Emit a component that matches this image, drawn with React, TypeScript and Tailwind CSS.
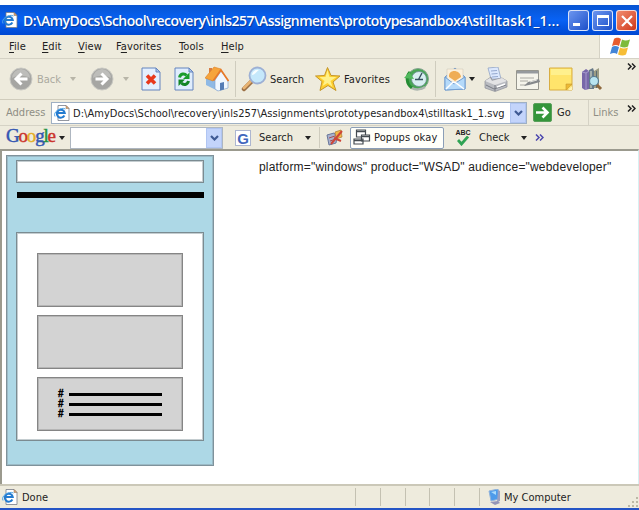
import React from 'react';

const PAGE_TITLE = 'D:\\AmyDocs\\School\\recovery\\inls257\\Assignments\\prototypesandbox4\\stilltask1_1...';
const ADDRESS = 'D:\\AmyDocs\\School\\recovery\\inls257\\Assignments\\prototypesandbox4\\stilltask1_1.svg';

const menuItems = [
  { before: '', key: 'F', after: 'ile', width: 'w-[33px]' },
  { before: '', key: 'E', after: 'dit', width: 'w-9' },
  { before: '', key: 'V', after: 'iew', width: 'w-[38px]' },
  { before: 'F', key: 'a', after: 'vorites', width: 'w-[63px]' },
  { before: '', key: 'T', after: 'ools', width: 'w-[42px]' },
  { before: '', key: 'H', after: 'elp', width: 'w-8' },
];

function Caret({ className }: { className: string }) {
  return (
    <svg viewBox="0 0 6 4" className={`w-1.5 h-1 shrink-0 ${className}`}>
      <path d="M0 0h6L3 4z" fill="currentColor" />
    </svg>
  );
}

function Chevrons({ className }: { className: string }) {
  return (
    <svg viewBox="0 0 9 7" className={`w-[9px] h-[7px] shrink-0 ${className}`} fill="none" stroke="currentColor" strokeWidth="1.5">
      <path d="M1 .5l3 3-3 3M5 .5l3 3-3 3" />
    </svg>
  );
}

function PageIcon({ className }: { className: string }) {
  return (
    <svg viewBox="0 0 16 16" className={`w-4 h-4 shrink-0 ${className}`}>
      <path d="M4 .5h8l3 3v12H4z" fill="#fff" stroke="#777c88" strokeWidth=".8" />
      <path d="M12 .5v3h3z" fill="#e4a66d" stroke="#8a7358" strokeWidth=".5" />
      <path d="M10.4 10.5a4 4 0 1 1 .4-2.4H3.5" fill="none" stroke="#237bd0" strokeWidth="2" />
      <path d="M1 11.5C-1.5 7 7 1.5 11.5 4" fill="none" stroke="#4ea3e5" strokeWidth="1" />
    </svg>
  );
}

function ArrowCircle({ flip, className }: { flip?: boolean; className: string }) {
  return (
    <svg viewBox="0 0 24 24" className={`w-6 h-6 shrink-0 ${className}`}>
      <circle cx="12" cy="12" r="11" fill="#a6a6a3" stroke="#c9c9c3" />
      <path d="M3 11a9 9 0 0 1 18 0c-5-3-13-3-18 0" fill="#bdbdba" />
      <path
        d={flip ? 'M5.5 12h11M11.5 6.5L17 12l-5.5 5.5' : 'M18.5 12h-11M12.5 6.5L7 12l5.5 5.5'}
        fill="none" stroke="#fff" strokeWidth="3"
      />
    </svg>
  );
}

function StopIcon() {
  return (
    <svg viewBox="0 0 20 24" className="ml-3 w-5 h-6 shrink-0">
      <path d="M1 1h14l4 4v18H1z" fill="#e4f0ff" stroke="#6584bd" />
      <path d="M15 1v4h4z" fill="#a9c4ed" stroke="#6584bd" />
      <path d="M6 8.5l8 8M14 8.5l-8 8" stroke="#e8391d" strokeWidth="3.6" />
    </svg>
  );
}

function RefreshIcon() {
  return (
    <svg viewBox="0 0 20 24" className="ml-[13px] w-5 h-6 shrink-0">
      <path d="M1 1h14l4 4v18H1z" fill="#e0edfd" stroke="#6584bd" />
      <path d="M15 1v4h4z" fill="#a9c4ed" stroke="#6584bd" />
      <path d="M5.5 10.5c1-4 5-4.5 7-2" fill="none" stroke="#199c2d" strokeWidth="3" />
      <path d="M15.5 5.5V12H9z" fill="#199c2d" />
      <path d="M14.5 14c-1 4-5 4.5-7 2" fill="none" stroke="#138525" strokeWidth="3" />
      <path d="M4.5 19v-6.5H11z" fill="#138525" />
    </svg>
  );
}

function HomeIcon() {
  return (
    <svg viewBox="0 0 24 26" className="ml-[11px] w-6 h-[26px] shrink-0">
      <path d="M1 11l9-6 3 8v12L1 19z" fill="#8fb9e5" />
      <path d="M10 14l6-9 7 9v8l-10 3-3-2z" fill="#f0f7ff" stroke="#84a3ce" strokeWidth=".7" />
      <path d="M4 2h3v5H4z" fill="#d77b43" />
      <path d="M0 12L9 1l7 2-8 12z" fill="#f6a43b" stroke="#dc8025" strokeWidth=".6" />
      <path d="M8.5 14.5L16 4l7.5 11" fill="none" stroke="#e87a29" strokeWidth="1.8" />
      <path d="M15 17l4-1v7.5l-4 1z" fill="#557cb5" />
    </svg>
  );
}

function SearchIcon() {
  return (
    <svg viewBox="0 0 26 26" className="ml-[5px] w-[26px] h-[26px] shrink-0">
      <path d="M3 23l7-7" stroke="#9c7045" strokeWidth="4.5" strokeLinecap="round" />
      <path d="M3 22l7-7" stroke="#e9b473" strokeWidth="2.8" strokeLinecap="round" />
      <circle cx="16.5" cy="9.5" r="8" fill="#c5e8fb" stroke="#9db0d4" strokeWidth="1.8" />
      <path d="M11 9c0-4 4-6 7-5-2 1-4 5-7 5" fill="#f8fdff" />
    </svg>
  );
}

function StarIcon() {
  return (
    <svg viewBox="0 0 26 26" className="ml-2.5 w-[26px] h-[26px] shrink-0">
      <path d="M12.5 1.5l3.5 8 9 .5-7 6 3 8.5-8-5-8 5 2-9-6.5-5.5 9-.5z" fill="#ffcf2e" stroke="#c4962b" strokeWidth="1" />
      <path d="M12.5 4l2 7h7l-6 4 2 6-5-4-5 3 2-5-5-4h6z" fill="#fff18a" />
    </svg>
  );
}

function HistoryIcon() {
  return (
    <svg viewBox="0 0 26 24" className="ml-3 w-[26px] h-6 shrink-0">
      <circle cx="14" cy="12" r="10.5" fill="#48a655" stroke="#8aa593" strokeWidth="1" />
      <circle cx="15" cy="12" r="7.5" fill="#d8eff1" stroke="#6d8e91" strokeWidth=".8" />
      <path d="M14.5 12.5L18 6M11 12.5h8" stroke="#36515f" strokeWidth="1.4" />
      <path d="M8 21C2 17 2 9 6 5" fill="none" stroke="#258c34" strokeWidth="3" />
      <path d="M0 11l5.5-6L10 12z" fill="#51b95d" />
      <path d="M8 21c3 2 9 2 13-1" fill="none" stroke="#abb5ae" strokeWidth="2.5" />
    </svg>
  );
}

function MailIcon() {
  return (
    <svg viewBox="0 0 22 24" className="ml-2 w-[22px] h-6 shrink-0">
      <path d="M1 10L11 1l10 9v12L1 23z" fill="#9ac4ed" stroke="#6f97c8" />
      <path d="M3 2h16v13H3z" fill="#fbf0dc" stroke="#c6c0b7" strokeWidth=".5" />
      <path d="M5 10c-1-8 11-8 12 0l-6 4z" fill="#efad55" />
      <path d="M1 10l9 7 11-7v12L1 23z" fill="#b5dafa" stroke="#739fd2" />
      <path d="M2 22l7-7 3 1 8 6" fill="none" stroke="#fff" strokeWidth="1.5" />
    </svg>
  );
}

function PrinterIcon() {
  return (
    <svg viewBox="0 0 24 25" className="ml-[9px] w-6 h-[25px] shrink-0">
      <path d="M4 1l10-1 3 12H7z" fill="#dce8fd" stroke="#92a4c5" strokeWidth=".8" />
      <path d="M7 4l6-.5M7.5 7l6-.5M8 10l6-.5" stroke="#94a8cf" />
      <path d="M1 14l6-4 1 3 10-2 5 3v6l-12 4.5L1 21z" fill="#b9bbc1" stroke="#8b8e97" strokeWidth=".7" />
      <path d="M1 14l10 4 12-4-5-3-10 3-2-3z" fill="#e3e3e5" />
      <path d="M11 18v6M2 18l8 4 12-4" fill="none" stroke="#787b84" strokeWidth="1" />
      <path d="M13 20l8-3" stroke="#fff" strokeWidth="1.5" />
    </svg>
  );
}

function EditIcon() {
  return (
    <svg viewBox="0 0 25 20" className="mt-0.5 ml-2 w-[25px] h-5 shrink-0">
      <path d="M.5.5h22v19H.5z" fill="#f5f4eb" stroke="#96968e" />
      <path d="M1 1h21v2.5H1z" fill="#969a9e" />
      <path d="M4 8h14M4 11h8M4 15h6" stroke="#aaa9a2" />
      <path d="M8 16l4-4 11-3 1 3-11 3z" fill="#85888b" />
      <path d="M14 12l7-2" stroke="#e4e4df" />
    </svg>
  );
}

function NoteIcon() {
  return (
    <svg viewBox="0 0 24 24" className="ml-2 w-6 h-6 shrink-0">
      <path d="M.5 1H23v22H.5z" fill="#ffe46b" stroke="#d8ad41" />
      <path d="M2 2h20v6H2z" fill="#fff08d" />
      <path d="M17 23v-6h6z" fill="#edb933" stroke="#c69731" strokeWidth=".6" />
      <path d="M19 23h4v-4z" fill="#fff3b4" />
    </svg>
  );
}

function ResearchIcon() {
  return (
    <svg viewBox="0 0 22 24" className="ml-2 w-[22px] h-6 shrink-0">
      <path d="M1 5l4-3 3 2v18l-4 1-3-2z" fill="#7867a9" />
      <path d="M1 5l4 1v17M5 6l3-2" fill="none" stroke="#a59bcb" />
      <path d="M8 3l4-2 1 3v18H8z" fill="#687a88" />
      <path d="M10 4v17" stroke="#bbc3b7" strokeWidth="1.5" />
      <path d="M13 4l5-3v20h-5z" fill="#9c9c83" />
      <path d="M15.5 4v17" stroke="#5d6c72" />
      <path d="M15 17l5 5" stroke="#8f693e" strokeWidth="3" />
      <circle cx="13" cy="14" r="4.5" fill="#b8e4f0" stroke="#587c91" strokeWidth="1.2" />
    </svg>
  );
}

function WindowsFlag() {
  return (
    <svg viewBox="0 0 20 19" className="w-5 h-[19px]">
      <path d="M4 2c3-2 5-1 7 0L9 9C7 7.5 5 7.5 2 9z" fill="#e75c2f" />
      <path d="M12 2.5c3 1.5 5 1 8 0l-2 7c-3 1.5-5 1-8 0z" fill="#7dbb3c" />
      <path d="M2 10c2-1.5 4-1.5 7 0l-2 7c-2-1.5-4-1.5-7 0z" fill="#4385d8" />
      <path d="M10 10.5c3 1.5 5 1 8 0l-2 7c-3 1.5-5 1-8 0z" fill="#f6bd35" />
    </svg>
  );
}

function TitleBar() {
  const button = 'w-[21px] h-[21px] shrink-0 rounded-[3px] border border-white/80 flex items-center justify-center';
  return (
    <div className="h-[30px] shrink-0 flex items-center bg-linear-to-b from-[#0754d2] via-[#0862f5] to-[#0048d2] pl-0.5 pr-0.5">
      <PageIcon className="" />
      <div className="ml-[5px] mt-0.5 w-[542px] shrink-0 font-['Open_Sans',sans-serif] text-[14px] leading-5 font-semibold text-white whitespace-nowrap [text-shadow:1px_1px_1px_#073796]">
        <span className="tracking-[-0.54px]">{PAGE_TITLE.slice(0, 66)}</span>
        <span className="tracking-[0.1px]">{PAGE_TITLE.slice(66)}</span>
      </div>
      <div className="ml-auto mt-px flex gap-[3px]">
        <div className={`${button} bg-linear-to-br from-[#6c95ef] to-[#1d4fc9]`}>
          <div className="w-[7px] h-[3px] bg-white mt-2 mr-1"></div>
        </div>
        <div className={`${button} bg-linear-to-br from-[#6c95ef] to-[#1d4fc9]`}>
          <div className="w-3 h-[11px] border border-t-[3px] border-white"></div>
        </div>
        <div className={`${button} bg-linear-to-br from-[#f18c6e] to-[#cf3516]`}>
          <svg viewBox="0 0 12 12" className="w-3 h-3">
            <path d="M1 1l10 10M11 1L1 11" stroke="#fff" strokeWidth="2.2" />
          </svg>
        </div>
      </div>
    </div>
  );
}

function MenuBar() {
  return (
    <div className="h-6 shrink-0 flex items-center border-b border-[#d5d2c5] pl-[9px]">
      {menuItems.map(item => (
        <div key={item.key} className={`${item.width} shrink-0 tracking-[0.1px] mt-px`}>
          {item.before}<span className="underline underline-offset-2">{item.key}</span>{item.after}
        </div>
      ))}
      <div className="ml-auto w-10 h-[23px] bg-white border-l border-[#d5d2c5] flex items-center justify-center">
        <WindowsFlag />
      </div>
    </div>
  );
}

function Toolbar() {
  return (
    <div className="h-[41px] shrink-0 flex items-center border-b border-[#d0ccbc] pl-[9px]">
      <ArrowCircle className="" />
      <span className="ml-1 mt-0.5 w-[25px] shrink-0 text-[#aaa99f]">Back</span>
      <Caret className="ml-2 text-[#b8b5a8]" />
      <ArrowCircle flip className="ml-[14px]" />
      <Caret className="ml-[9px] text-[#b8b5a8]" />
      <StopIcon />
      <RefreshIcon />
      <HomeIcon />
      <div className="ml-1.5 w-px h-9 bg-[#cfccbe]"></div>
      <SearchIcon />
      <span className="ml-[3px] mt-0.5 w-[35px] shrink-0">Search</span>
      <StarIcon />
      <span className="ml-[3px] mt-0.5 w-12 shrink-0 tracking-[0.15px]">Favorites</span>
      <HistoryIcon />
      <div className="ml-[5px] w-px h-9 bg-[#cfccbe]"></div>
      <MailIcon />
      <Caret className="ml-[3px]" />
      <PrinterIcon />
      <EditIcon />
      <NoteIcon />
      <ResearchIcon />
      <Chevrons className="ml-auto mr-[3px] mb-[26px]" />
    </div>
  );
}

function DropButton() {
  return (
    <div className="w-4 h-full shrink-0 bg-[#c3d4fb] border border-[#b0c5f2] flex items-center justify-center">
      <svg viewBox="0 0 9 6" className="w-[9px] h-1.5" fill="none" stroke="#3f5a94" strokeWidth="2.2">
        <path d="M1 1l3.5 3.5L8 1" />
      </svg>
    </div>
  );
}

function AddressBar() {
  return (
    <div className="h-[26px] shrink-0 flex items-center border-b border-[#d5d2c5] pl-1.5">
      <span className="w-[45px] shrink-0 text-[#8f8e84]">Address</span>
      <div className="w-[476px] h-[22px] shrink-0 flex items-center bg-white border border-[#9fb0c4]">
        <PageIcon className="ml-0.5" />
        <span className="ml-[3px] mt-0.5 flex-1 whitespace-nowrap tracking-[0.04px]">{ADDRESS}</span>
        <DropButton />
      </div>
      <svg viewBox="0 0 19 19" className="ml-1.5 w-[19px] h-[19px] shrink-0">
        <rect x=".5" y=".5" width="18" height="18" rx="1.5" fill="#35953b" stroke="#5aa05b" />
        <path d="M3 9.5h11M9.5 4.5l5 5-5 5" fill="none" stroke="#fff" strokeWidth="2.6" />
      </svg>
      <span className="ml-[5px] mt-px w-[31px] shrink-0">Go</span>
      <div className="w-px h-[25px] bg-[#d5d2c5]"></div>
      <span className="ml-1 text-[#8f8e84]">Links</span>
      <Chevrons className="ml-auto mr-[3px] mb-[8px]" />
    </div>
  );
}

function GoogleBar() {
  return (
    <div className="h-[23px] shrink-0 flex items-center pl-1.5">
      <div className="w-[50px] shrink-0 font-['Liberation_Serif',serif] text-[19px] leading-5 tracking-[-1.2px] mb-1 [-webkit-text-stroke:0.5px]">
        <span className="text-[#3457b2]">G</span>
        <span className="text-[#cb342c]">o</span>
        <span className="text-[#e4ae27]">o</span>
        <span className="text-[#3457b2]">g</span>
        <span className="text-[#259344]">l</span>
        <span className="text-[#cb342c]">e</span>
      </div>
      <Caret className="ml-[3px]" />
      <div className="ml-[5px] w-[153px] h-[22px] shrink-0 flex justify-end bg-white border border-[#aeb6c0]">
        <DropButton />
      </div>
      <div className="ml-3 w-4 h-4 shrink-0 bg-white border border-[#adb6d0] font-['Liberation_Sans',sans-serif] text-[15px] leading-[15px] font-bold text-center text-[#4167bd]">G</div>
      <span className="ml-2 w-9 shrink-0">Search</span>
      <Caret className="ml-2.5" />
      <div className="ml-2 w-px h-[21px] bg-[#cfccbe]"></div>
      <svg viewBox="0 0 18 17" className="ml-1.5 w-[18px] h-[17px] shrink-0">
        <path d="M1 6l7-2 3 4-1 6-7 2z" fill="#a9b1cd" stroke="#69779b" />
        <path d="M3 9l6-2M4 12l6-2" stroke="#a54e54" />
        <path d="M9 3l6-2 1 7-6 2z" fill="#f2b748" stroke="#a97934" strokeWidth=".7" />
        <path d="M5 15L16 2M8 9l7 3" stroke="#ce4638" strokeWidth="2" />
      </svg>
      <div className="ml-[6px] w-[94px] h-[22px] shrink-0 flex items-center bg-[#fffffa] border border-[#8b9eb7] rounded-[2px]">
        <svg viewBox="0 0 18 17" className="ml-0.5 w-[18px] h-[17px] shrink-0" fill="#fff" stroke="#444b50" strokeWidth="1.2">
          <path d="M3.5 1h9v7h-9z" />
          <path d="M8.5 6h8v6h-8zM1 10h9v5H1z" />
          <path d="M3.5 2.5h9M8.5 7.5h8M1 11.5h9" strokeWidth="1.6" />
        </svg>
        <span className="ml-[3px] mt-px whitespace-nowrap tracking-[0.1px]">Popups okay</span>
      </div>
      <div className="ml-[10px] w-[18px] shrink-0 flex flex-col items-center">
        <span className="font-['Liberation_Sans',sans-serif] text-[7px] leading-[6px] font-bold">ABC</span>
        <svg viewBox="0 0 12 10" className="w-3 h-2.5">
          <path d="M1 4l3.5 4L11 .5" fill="none" stroke="#2fa354" strokeWidth="2.8" />
        </svg>
      </div>
      <span className="ml-[7px] w-[42px] shrink-0">Check</span>
      <Caret className="" />
      <Chevrons className="ml-2 text-[#4c48ae]" />
    </div>
  );
}

function Wireframe() {
  return (
    <div className="ml-1 mt-1 w-[208px] h-[311px] shrink-0 bg-[#add8e6] border border-[#7f929b] shadow-[inset_0_0_0_1px_#9bbac6] px-[9px] pt-1">
      <div className="h-[23px] bg-white border border-[#7b8b91] shadow-[inset_0_0_0_1px_#c4cdd0]"></div>
      <div className="mt-[9px] ml-px h-1.5 bg-black"></div>
      <div className="mt-[34px] h-[209px] bg-white border border-[#7b8b91] shadow-[inset_0_0_0_1px_#c4cdd0] px-5 pt-5 flex flex-col gap-[8px]">
        <div className="h-[54px] bg-[#d3d3d3] border border-[#858585] shadow-[inset_0_0_0_1px_#b5b5b5]"></div>
        <div className="h-[54px] bg-[#d3d3d3] border border-[#858585] shadow-[inset_0_0_0_1px_#b5b5b5]"></div>
        <div className="h-[54px] bg-[#d3d3d3] border border-[#858585] shadow-[inset_0_0_0_1px_#b5b5b5] pl-5 pt-[11px]">
          {[1, 2, 3].map(row => (
            <div key={row} className="h-[10px] flex items-center gap-[4px]">
              <span className="w-[7px] font-['Liberation_Sans',sans-serif] text-[10px] leading-[10px] font-bold text-black [-webkit-text-stroke:0.4px]">#</span>
              <div className="w-[93px] h-[3px] bg-black"></div>
            </div>
          ))}
        </div>
      </div>
    </div>
  );
}

function StatusBar() {
  return (
    <div className="h-6 shrink-0 flex items-center border-t-2 border-[#cbc8b8] pl-0.5">
      <PageIcon className="" />
      <span className="ml-1 mt-0.5 w-[333px] shrink-0">Done</span>
      {[1, 2, 3, 4, 5].map(pane => (
        <div key={pane} className="w-[24.8px] h-[18px] shrink-0 border-l border-[#c4c1b2]"></div>
      ))}
      <div className="w-px h-[18px] bg-[#c4c1b2]"></div>
      <svg viewBox="0 0 13 16" className="ml-2 w-[13px] h-4 shrink-0">
        <path d="M1 2l9-2 1 10-8 2z" fill="#4e9bea" stroke="#91b3dc" />
        <path d="M3 3l5-1v4z" fill="#a9dbfc" />
        <path d="M10 1l2 1v10l-3 1z" fill="#9aa1c2" />
        <path d="M2 13l8-1 2 2-5 2z" fill="#9294b7" />
      </svg>
      <span className="ml-[3px] mt-0.5 whitespace-nowrap">My Computer</span>
      <svg viewBox="0 0 12 12" className="ml-auto mt-auto w-3 h-3" fill="#bcb8a5">
        <path d="M9 1h2v2H9zM9 5h2v2H9zM9 9h2v2H9zM5 5h2v2H5zM5 9h2v2H5zM1 9h2v2H1z" />
      </svg>
    </div>
  );
}

export default function App() {
  return (
    <div className="w-[639px] h-[510px] overflow-hidden flex flex-col bg-[#eeebdd] font-['DejaVu_Sans_Condensed','DejaVu_Sans',sans-serif] text-[11px] leading-[14px] text-[#222]">
      <div className="h-[5px] shrink-0 bg-white"></div>
      <TitleBar />
      <MenuBar />
      <Toolbar />
      <AddressBar />
      <GoogleBar />
      <div className="flex-1 min-h-0 flex bg-white border-t-2 border-l-2 border-[#9b9a8e] border-r border-r-[#d8f0f2]">
        <Wireframe />
        <div className="ml-[45px] mt-[9px] font-['Liberation_Sans',sans-serif] text-[12px] leading-[14px] tracking-[0.18px] whitespace-nowrap">
          platform="windows" product="WSAD" audience="webdeveloper"
        </div>
      </div>
      <StatusBar />
      <div className="h-0.5 shrink-0 bg-[#2454c5]"></div>
    </div>
  );
}
